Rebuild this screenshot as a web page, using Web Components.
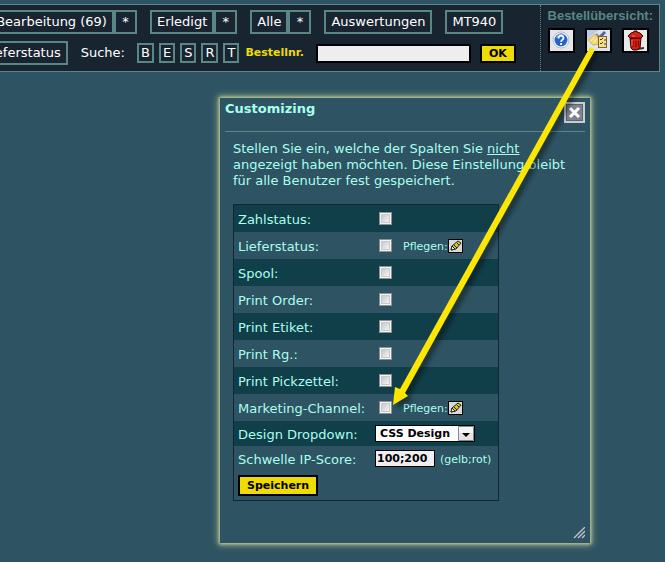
<!DOCTYPE html>
<html lang="de">
<head>
<meta charset="utf-8">
<title>Bestellübersicht</title>
<style>
  body {
    margin: 0;
    min-height: 100vh;
    overflow: hidden;
    background: #2e5362;
    color: #aaffee;
    font: 13px/16px "DejaVu Sans", Verdana, sans-serif;
    --line: #588785;
    --dark: #182531;
    --yellow: #eedb00;
    --row: #103e49;
  }
</style>
</head>
<body>

<order-toolbar>
  <tool-group>
    <tool-button>In Bearbeitung (69)</tool-button>
    <tool-button>*</tool-button>
  </tool-group>
  <tool-group>
    <tool-button>Erledigt</tool-button>
    <tool-button>*</tool-button>
  </tool-group>
  <tool-group>
    <tool-button>Alle</tool-button>
    <tool-button>*</tool-button>
  </tool-group>
  <tool-button>Auswertungen</tool-button>
  <tool-button>MT940</tool-button>

  <tool-button slot="search">Lieferstatus</tool-button>
  <order-search slot="search"></order-search>

  <icon-button slot="icons" name="Hilfe">
    <svg width="23" height="21" viewBox="0 0 23 21">
      <rect width="23" height="21" fill="#e4e6ea"/>
      <circle cx="11" cy="10" r="8" fill="#fff" stroke="#b4bcc8"/>
      <circle cx="11" cy="10" r="6.5" fill="#2463c8"/>
      <path d="M6.500 8a5 5 0 0 1 8-2.500" fill="none" stroke="#6d9fe8" stroke-width="1.500"/>
      <path d="M8.500 8.500c0-3.800 5.300-3.500 5-.4-.2 2-2.400 1.600-2.400 3.700M11.100 13v2" fill="none" stroke="#fff" stroke-width="1.800"/>
    </svg>
  </icon-button>
  <icon-button slot="icons" name="Customizing">
    <svg width="23" height="21" viewBox="0 0 23 21">
      <rect width="23" height="21" fill="#dfe5ef"/>
      <path d="M0 0h12L0 9z" fill="#b9cde8"/>
      <path d="M12 6l5-5 2 2-5 5z" fill="#54609c"/>
      <path d="M10 3l5 6-4 2-4-5z" fill="#8b91a5"/>
      <path d="M8 4L1 10l5 5 6-1 1-4z" fill="#f0d779" stroke="#cdb35c"/>
      <path d="M7 7l-3 4M9 9l-2 4" stroke="#fff3b4"/>
      <rect x="11.500" y="6.500" width="8" height="11" fill="#f6de8b" stroke="#7d6128"/>
      <path d="M13 9l1 1 2-2M13 13l1 1 2-2M17 10h2M17 14h2" fill="none" stroke="#3d3820"/>
    </svg>
  </icon-button>
  <icon-button slot="icons" name="Papierkorb">
    <svg width="23" height="21" viewBox="0 0 23 21">
      <rect width="23" height="21" fill="#e9e9e9"/>
      <path d="M13 18l7-1v2l-7 1z" fill="#333"/>
      <path d="M6 8h11l-1 10-3 2H9l-2-2z" fill="#d51d10" stroke="#2b0604"/>
      <path d="M4 6l3-3 3-1V1h3v1l3 1 3 3-2 2H6z" fill="#dc2113" stroke="#2b0604"/>
      <path d="M9 11v6M12 11v6M14.500 11v5" stroke="#6e0b05"/>
      <path d="M8 10v6M8 6h3" stroke="#ff6d57"/>
    </svg>
  </icon-button>
</order-toolbar>

<popup-window>
  <span slot="title">Customizing</span>
  <span>Stellen Sie ein, welche der Spalten Sie <u>nicht</u> angezeigt haben möchten. Diese Einstellung bleibt für alle Benutzer fest gespeichert.</span>
  <settings-form slot="form"></settings-form>
</popup-window>

<pointer-arrow></pointer-arrow>

<script>
class OrderToolbar extends HTMLElement {
  connectedCallback() {
    this.attachShadow({ mode: 'open' });
    this.shadowRoot.innerHTML = `
      <style>
        :host {
          display: flex;
          box-sizing: border-box;
          margin: 4px 5px 0 -28px;
          border: 1px solid var(--line);
          background: var(--dark);
        }
        nav {
          flex: 1;
          display: grid;
          gap: 7px;
          padding: 5px 0 6px;
        }
        .row {
          display: flex;
          align-items: center;
          gap: 13px;
          white-space: nowrap;
        }
        .search { padding-left: 4px; }
        aside {
          flex: none;
          padding: 3px 6px 0 7px;
          border-left: 1px dotted var(--line);
          color: var(--line);
        }
        h2 {
          margin: 0 0 4px;
          font: bold 13px/16px "Liberation Sans", Arial, sans-serif;
        }
        .icons {
          display: flex;
          gap: 10px;
        }
      </style>
      <nav>
        <div class="row"><slot></slot></div>
        <div class="row search"><slot name="search"></slot></div>
      </nav>
      <aside>
        <h2>Bestellübersicht:</h2>
        <div class="icons"><slot name="icons"></slot></div>
      </aside>
    `;
  }
}

class ToolGroup extends HTMLElement {
  connectedCallback() {
    this.attachShadow({ mode: 'open' });
    this.shadowRoot.innerHTML = `
      <style>
        :host {
          display: flex;
          --button-min: 23px;
        }
      </style>
      <slot></slot>
    `;
  }
}

class ToolButton extends HTMLElement {
  connectedCallback() {
    this.attachShadow({ mode: 'open' });
    this.shadowRoot.innerHTML = `
      <style>
        :host { display: block; }
        button {
          display: block;
          min-width: var(--button-min, 0);
          height: var(--button-height, 24px);
          padding: 0 var(--button-padding, 5px);
          border: 2px solid var(--line);
          background: none;
          color: white;
          font: inherit;
          white-space: nowrap;
        }
      </style>
      <button type="button"><slot></slot></button>
    `;
  }
}

class OrderSearch extends HTMLElement {
  connectedCallback() {
    this.attachShadow({ mode: 'open' });
    this.shadowRoot.innerHTML = `
      <style>
        :host {
          display: flex;
          align-items: center;
          color: white;
        }
        .letters {
          display: flex;
          gap: 5px;
          margin: 0 6px 0 12px;
          --button-height: 20px;
          --button-padding: 2px;
        }
        label {
          color: var(--yellow);
          font-size: 11px;
          font-weight: bold;
        }
        input, .ok {
          box-sizing: border-box;
          height: 19px;
          border: 2px solid black;
          font: bold 11px/15px "DejaVu Sans", Verdana, sans-serif;
        }
        input {
          width: 155px;
          margin: 0 9px 0 12px;
          padding: 0 2px;
          background: #eeeeee;
        }
        .ok {
          padding: 0 7px;
          background: var(--yellow);
          color: black;
        }
      </style>
      <span>Suche:</span>
      <div class="letters">
        <tool-button>B</tool-button>
        <tool-button>E</tool-button>
        <tool-button>S</tool-button>
        <tool-button>R</tool-button>
        <tool-button>T</tool-button>
      </div>
      <label for="order">Bestellnr.</label>
      <input id="order" type="text">
      <button class="ok" type="button">OK</button>
    `;
  }
}

class IconButton extends HTMLElement {
  connectedCallback() {
    this.attachShadow({ mode: 'open' });
    this.shadowRoot.innerHTML = `
      <style>
        :host { display: block; }
        button {
          display: flex;
          padding: 0;
          border: 2px solid black;
          background: #e4e4e4;
        }
        ::slotted(svg) { display: block; }
      </style>
      <button type="button" aria-label="${this.getAttribute('name')}"><slot></slot></button>
    `;
  }
}

class PopupWindow extends HTMLElement {
  connectedCallback() {
    this.attachShadow({ mode: 'open' });
    this.shadowRoot.innerHTML = `
      <style>
        :host {
          position: absolute;
          top: 98px;
          left: 220px;
          display: block;
          box-sizing: border-box;
          width: 370px;
          padding: 4px 5px;
          background: #2e5362;
          box-shadow: 0 0 3px 1px #bccb98, 0 0 7px 2px #8fa584;
        }
        header {
          display: flex;
          justify-content: space-between;
          align-items: flex-start;
          padding-bottom: 8px;
          border-bottom: 1px solid var(--line);
        }
        h1 {
          margin: 0;
          font-size: 13px;
          line-height: 14px;
        }
        .close {
          display: flex;
          padding: 0;
          border: 0;
          background: none;
        }
        section { padding: 9px 8px 0; }
        p { margin: 0 0 15px; }
        footer {
          display: flex;
          justify-content: flex-end;
          padding-top: 26px;
        }
      </style>
      <header>
        <h1><slot name="title"></slot></h1>
        <button class="close" type="button" aria-label="Schließen">
          <svg width="21" height="21" viewBox="0 0 21 21">
            <rect x="1" y="1" width="19" height="19" fill="#7c858f" stroke="#c9ccd0" stroke-width="2"/>
            <rect x="2.500" y="2.500" width="16" height="16" fill="none" stroke="#5c6570"/>
            <path d="M6 6l9 9M15 6l-9 9" stroke="#fff" stroke-width="3"/>
          </svg>
        </button>
      </header>
      <section>
        <p><slot></slot></p>
        <slot name="form"></slot>
      </section>
      <footer>
        <svg width="12" height="12" viewBox="0 0 12 12">
          <path d="M1 11L12 0M5 11l7-7M9 11l3-3" stroke="#c3c7c8" stroke-width="1.300"/>
        </svg>
      </footer>
    `;
  }
}

// One tick box line, with an optional edit button behind it
class SettingRow extends HTMLElement {
  connectedCallback() {
    this.attachShadow({ mode: 'open' });
    const edit = this.hasAttribute('edit') ? `
      <span>Pflegen:</span>
      <button type="button" aria-label="Pflegen">
        <svg width="13" height="12" viewBox="0 0 13 12">
          <rect width="13" height="12" fill="#d9d9d9"/>
          <path d="M2 10l1-4 6-5 3 2-5 6z" fill="#d8cb1c" stroke="#222"/>
          <path d="M2 10l1-4 3 3z" fill="#fff" stroke="#222"/>
          <path d="M5 5l3 3M8 3l2 2" stroke="#222"/>
        </svg>
      </button>` : '';
    this.shadowRoot.innerHTML = `
      <style>
        :host {
          display: grid;
          grid-template-columns: 137px 1fr;
          align-items: center;
          height: 27px;
          padding-left: 4px;
        }
        label { padding-top: 2px; }
        div {
          display: flex;
          align-items: center;
        }
        input {
          appearance: none;
          box-sizing: border-box;
          width: 13px;
          height: 13px;
          margin: 0 11px 0 4px;
          border: 1px solid #8e8f8f;
          background: linear-gradient(135deg, #c5c8ce, #f4f4f4) center / 7px 7px no-repeat #f4f4f4;
          box-shadow: inset 0 0 0 1px #f4f4f4, inset 0 0 0 2px #c6cace;
        }
        span {
          padding-top: 2px;
          font-size: 11px;
        }
        button {
          display: flex;
          padding: 0;
          border: 1px solid black;
          background: none;
        }
      </style>
      <label for="box">${this.getAttribute('label')}</label>
      <div><input id="box" type="checkbox">${edit}</div>
    `;
  }
}

class SettingsForm extends HTMLElement {
  connectedCallback() {
    this.attachShadow({ mode: 'open' });
    this.shadowRoot.innerHTML = `
      <style>
        :host { display: block; }
        form {
          box-sizing: border-box;
          width: 266px;
          margin: 0;
          border: 1px solid var(--dark);
        }
        .odd { background: var(--row); }
        .field {
          display: grid;
          grid-template-columns: 137px 1fr;
          align-items: center;
          height: 25px;
          padding-left: 4px;
        }
        .field label { padding-top: 2px; }
        .value {
          display: flex;
          align-items: center;
          gap: 5px;
        }
        .select {
          display: grid;
          grid-template-columns: 1fr 18px;
          width: 100px;
        }
        select, input, button {
          box-sizing: border-box;
          height: 17px;
          border: 1px solid black;
          font: bold 11px/15px "DejaVu Sans", Verdana, sans-serif;
          color: black;
        }
        select {
          grid-area: 1 / 1 / 2 / 3;
          appearance: none;
          padding: 0 0 0 4px;
          border-radius: 0;
          background: white;
        }
        .select svg {
          grid-area: 1 / 2;
          pointer-events: none;
        }
        input {
          width: 60px;
          padding: 0 1px;
          background: #eeeef2;
        }
        small {
          padding-top: 2px;
          font-size: 11px;
        }
        button {
          display: block;
          height: 21px;
          margin: 4px 0 4px 4px;
          padding: 0 7px;
          border-width: 2px;
          background: var(--yellow);
        }
      </style>
      <form>
        <setting-row class="odd" label="Zahlstatus:"></setting-row>
        <setting-row label="Lieferstatus:" edit></setting-row>
        <setting-row class="odd" label="Spool:"></setting-row>
        <setting-row label="Print Order:"></setting-row>
        <setting-row class="odd" label="Print Etiket:"></setting-row>
        <setting-row label="Print Rg.:"></setting-row>
        <setting-row class="odd" label="Print Pickzettel:"></setting-row>
        <setting-row label="Marketing-Channel:" edit></setting-row>
        <div class="field odd">
          <label for="design">Design Dropdown:</label>
          <div class="select">
            <select id="design"><option>CSS Design</option></select>
            <svg width="18" height="17" viewBox="0 0 18 17">
              <path d="M1.500 1.500h15v14h-15z" fill="#e3e3e5" stroke="#85888c"/>
              <path d="M2 2h14v6H2z" fill="#f4f4f4"/>
              <path d="M5 8h8l-4 4z" fill="#000"/>
            </svg>
          </div>
        </div>
        <div class="field">
          <label for="score">Schwelle IP-Score:</label>
          <div class="value">
            <input id="score" type="text" value="100;200">
            <small>(gelb;rot)</small>
          </div>
        </div>
        <button type="button">Speichern</button>
      </form>
    `;
  }
}

class PointerArrow extends HTMLElement {
  connectedCallback() {
    this.attachShadow({ mode: 'open' });
    this.shadowRoot.innerHTML = `
      <style>
        :host {
          position: absolute;
          top: 40px;
          left: 384px;
          pointer-events: none;
        }
        svg {
          display: block;
          filter: drop-shadow(4px 4px 2px rgba(0, 0, 0, 0.4));
        }
      </style>
      <svg width="220" height="375" viewBox="384 40 220 375">
        <path d="M590 47l5 3L405 393l3 3-15 9 2-18 5 2z" fill="#ffe600"/>
      </svg>
    `;
  }
}

customElements.define('order-toolbar', OrderToolbar);
customElements.define('tool-group', ToolGroup);
customElements.define('tool-button', ToolButton);
customElements.define('order-search', OrderSearch);
customElements.define('icon-button', IconButton);
customElements.define('popup-window', PopupWindow);
customElements.define('setting-row', SettingRow);
customElements.define('settings-form', SettingsForm);
customElements.define('pointer-arrow', PointerArrow);
</script>
</body>
</html>
